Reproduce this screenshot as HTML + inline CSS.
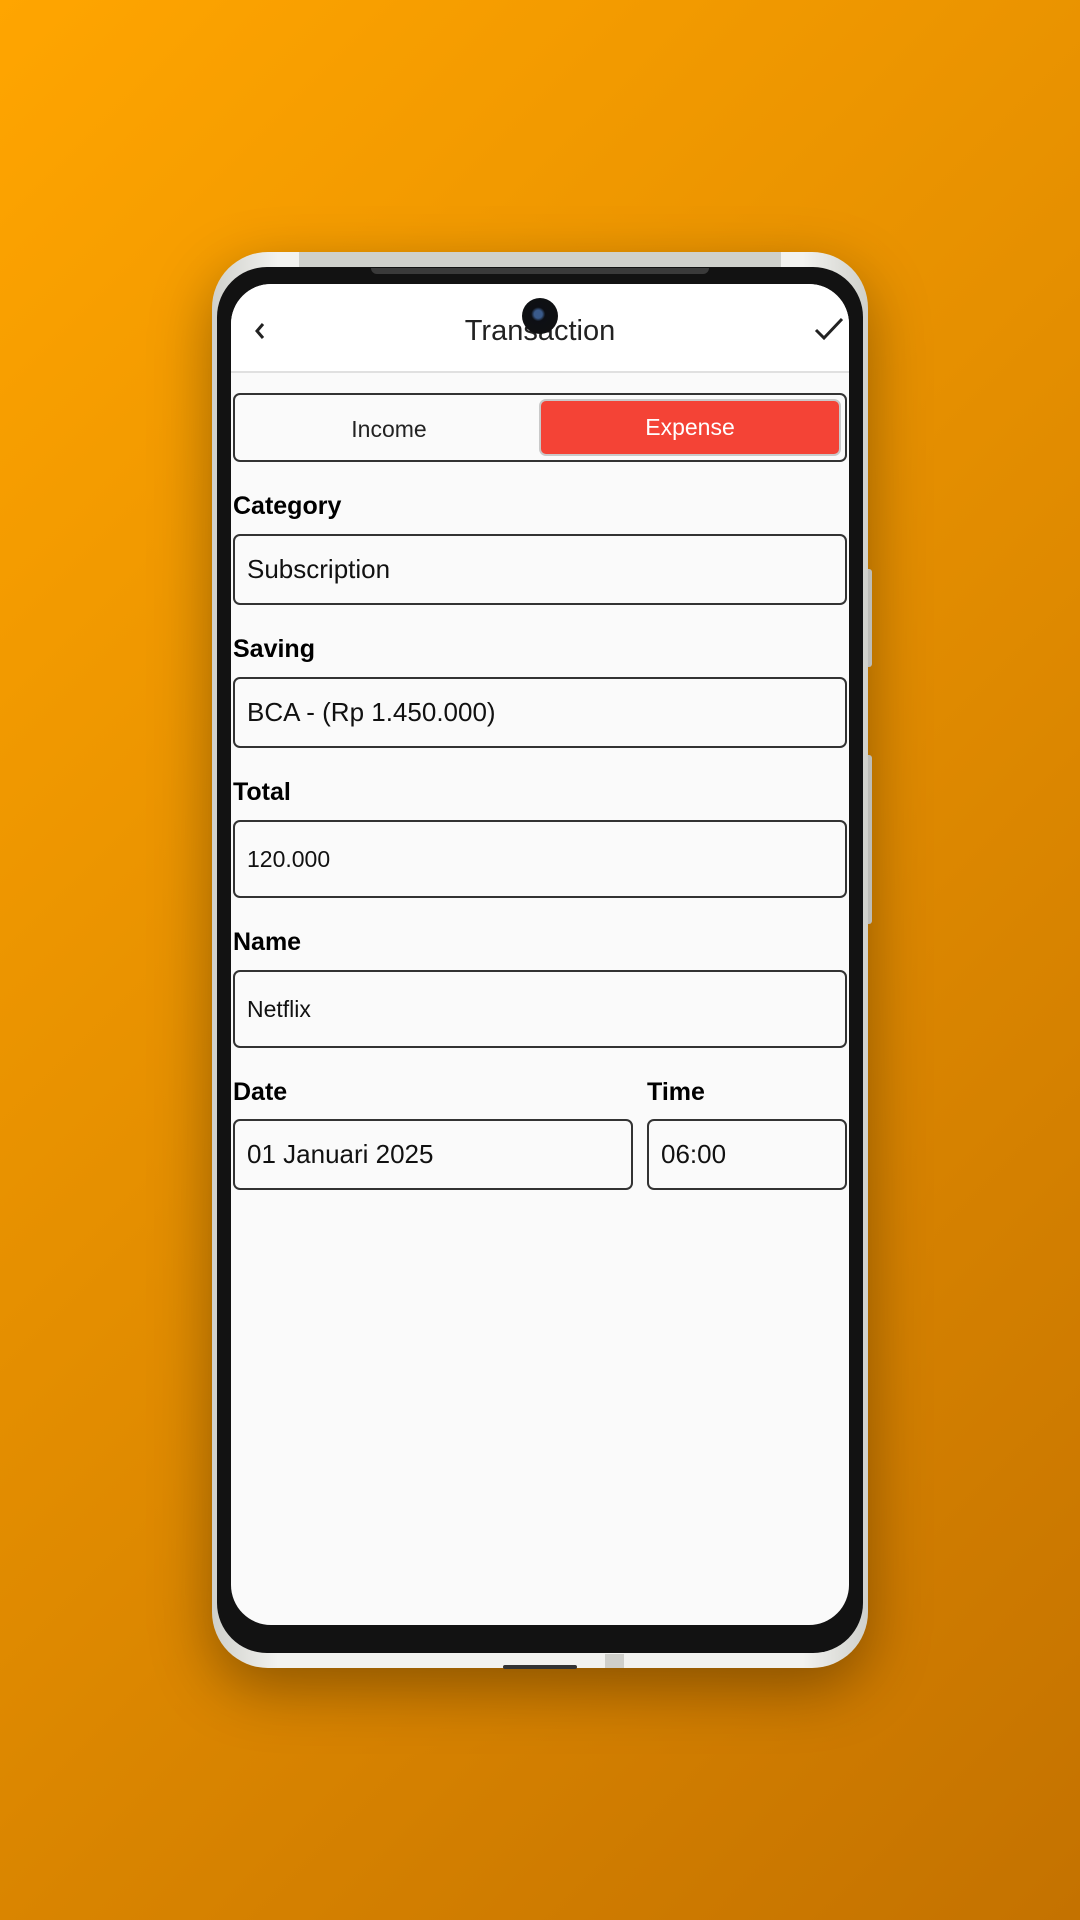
<!DOCTYPE html>
<html><head><meta charset="utf-8"><style>
*{margin:0;padding:0;box-sizing:border-box}
body{width:1080px;height:1920px;overflow:hidden;background:linear-gradient(135deg,#ffa500 0%,#e58f00 45%,#c47200 100%);font-family:"Liberation Sans",sans-serif;position:relative}
.a{position:absolute}
.phone{left:212px;top:252px;width:656px;height:1416px;border-radius:56px;background:linear-gradient(90deg,#cfd0cb,#f2f2ef 10%,#f2f2ef 90%,#cfd0cb);box-shadow:0 20px 60px rgba(0,0,0,.35)}
.bezel{left:217px;top:267px;width:646px;height:1386px;border-radius:50px;background:#121212}
.screen{left:231px;top:284px;width:618px;height:1341px;border-radius:40px;background:#fafafa;overflow:hidden}
.lbl{font-weight:bold;font-size:25px;color:#000;left:2px}
.box{border:2px solid #333;border-radius:7px;background:#fafafa;font-size:26px;color:#111;padding-left:12px;display:flex;align-items:center}
</style></head><body>
<div class="a phone"></div>
<div class="a" style="left:299px;top:252px;width:482px;height:15px;background:#cfd0cb"></div>
<div class="a bezel"></div>
<div class="a" style="left:371px;top:268px;width:338px;height:6px;border-radius:0 0 6px 6px;background:#3a3a3a"></div>
<div class="a" style="left:868px;top:569px;width:4px;height:98px;background:#bdbdb8;border-radius:0 3px 3px 0"></div>
<div class="a" style="left:868px;top:755px;width:4px;height:169px;background:#bdbdb8;border-radius:0 3px 3px 0"></div>
<div class="a" style="left:503px;top:1665px;width:74px;height:4px;background:#333;border-radius:2px"></div>
<div class="a" style="left:605px;top:1654px;width:19px;height:14px;background:#cfcfca"></div>
<div class="a screen">
  <div class="a" style="left:0;top:0;width:618px;height:89px;background:#fff;border-bottom:2px solid #e0e0e0"></div>
  <svg class="a" style="left:19px;top:36px" width="20" height="22" viewBox="0 0 20 22"><path d="M13 4 L7 11 L13 18" fill="none" stroke="#222" stroke-width="3"/></svg>
  <svg class="a" style="left:583px;top:32px" width="30" height="26" viewBox="0 0 30 26"><path d="M2 14 L10 22 L28 3" fill="none" stroke="#222" stroke-width="3"/></svg>
  <div class="a" style="left:0;top:31px;width:618px;text-align:center;font-size:29px;color:#222">Transaction</div>
  <div class="a" style="left:2px;top:109px;width:614px;height:69px;border:2px solid #333;border-radius:7px;background:#fafafa"></div>
  <div class="a" style="left:2px;top:132px;width:312px;text-align:center;font-size:23px;color:#222">Income</div>
  <div class="a" style="left:308px;top:115px;width:302px;height:57px;background:#f44336;border:2px solid #c9c9c9;border-radius:7px;color:#fff;font-size:23px;display:flex;align-items:center;justify-content:center">Expense</div>
  <div class="a lbl" style="top:208px">Category</div>
  <div class="a box" style="left:2px;top:250px;width:614px;height:71px">Subscription</div>
  <div class="a lbl" style="top:351px">Saving</div>
  <div class="a box" style="left:2px;top:393px;width:614px;height:71px">BCA - (Rp 1.450.000)</div>
  <div class="a lbl" style="top:494px">Total</div>
  <div class="a box" style="left:2px;top:536px;width:614px;height:78px;font-size:23px">120.000</div>
  <div class="a lbl" style="top:644px">Name</div>
  <div class="a box" style="left:2px;top:686px;width:614px;height:78px;font-size:23px">Netflix</div>
  <div class="a lbl" style="top:794px">Date</div>
  <div class="a lbl" style="top:794px;left:416px">Time</div>
  <div class="a box" style="left:2px;top:835px;width:400px;height:71px">01 Januari 2025</div>
  <div class="a box" style="left:416px;top:835px;width:200px;height:71px">06:00</div>
</div>
<div class="a" style="left:522px;top:298px;width:36px;height:36px;border-radius:50%;background:radial-gradient(circle at 45% 45%,#3a5a8a 0 4px,#0d0f14 7px,#111 100%)"></div>
</body></html>
